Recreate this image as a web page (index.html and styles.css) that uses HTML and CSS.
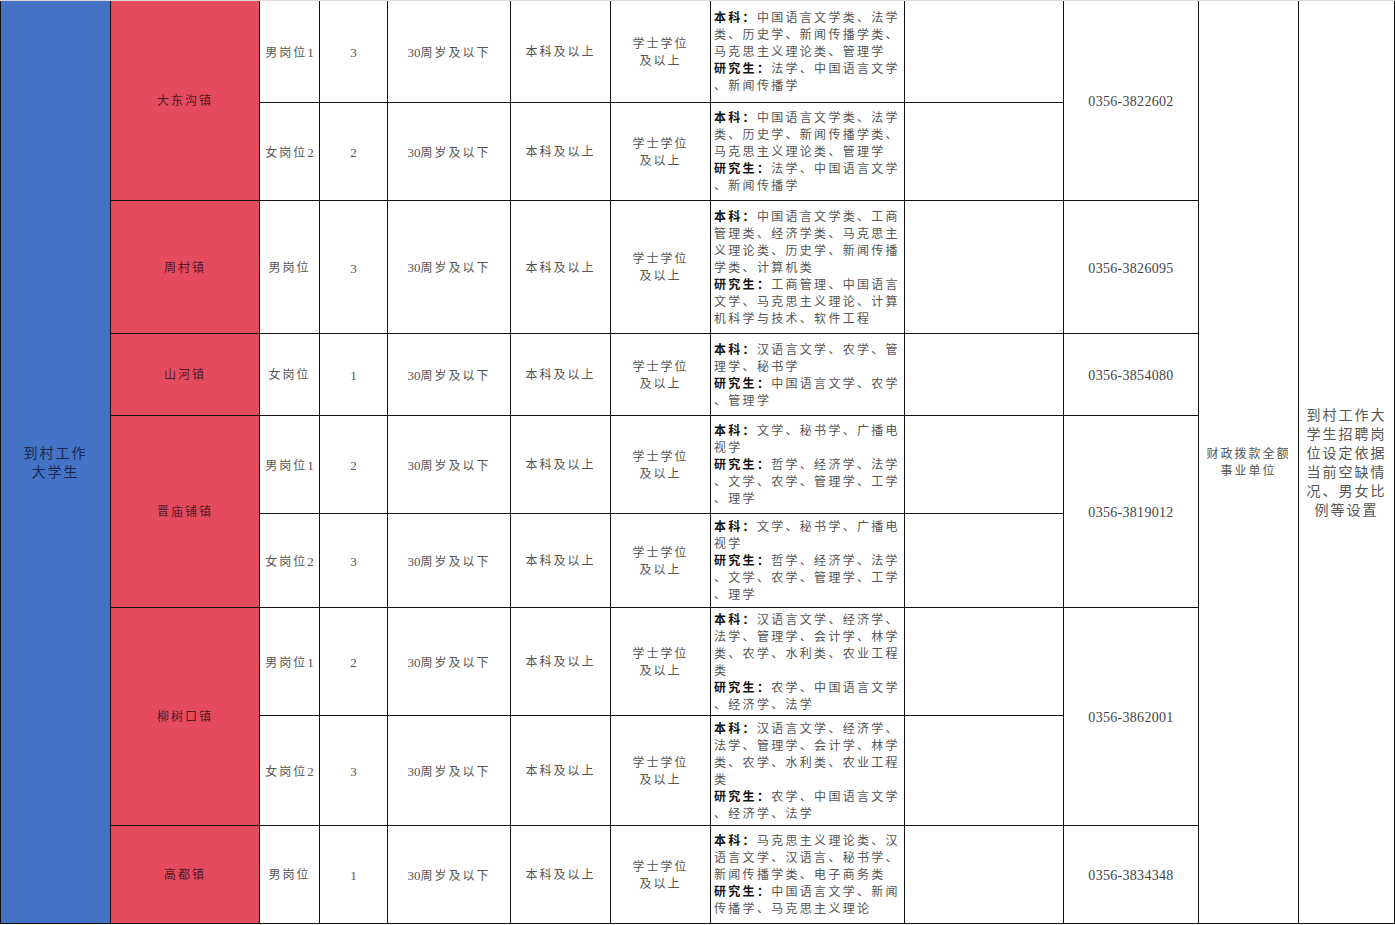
FILE: index.html
```html
<!DOCTYPE html>
<html lang="zh-CN">
<head>
<meta charset="utf-8">
<title>到村工作大学生招聘岗位</title>
<link rel="stylesheet" href="styles.css">
</head>
<body>
<table class="grid">
  <colgroup>
    <col class="c-type"><col class="c-town"><col class="c-post"><col class="c-num"><col class="c-age">
    <col class="c-edu"><col class="c-deg"><col class="c-major"><col class="c-note"><col class="c-tel">
    <col class="c-unit"><col class="c-basis">
  </colgroup>
  <tbody>
    <tr class="r1">
      <td class="type" rowspan="9">到村工作<br>大学生</td>
      <td class="town" rowspan="2">大东沟镇</td>
      <td>男岗位<span class="d">1</span></td>
      <td class="n">3</td>
      <td><span class="d">30</span>周岁及以下</td>
      <td>本科及以上</td>
      <td>学士学位<br>及以上</td>
      <td class="major"><b>本科：</b>中国语言文学类、法学<br>类、历史学、新闻传播学类、<br>马克思主义理论类、管理学<br><b>研究生：</b>法学、中国语言文学<br>、新闻传播学</td>
      <td></td>
      <td class="tel" rowspan="2">0356-3822602</td>
      <td class="unit" rowspan="9">财政拨款全额<br>事业单位</td>
      <td class="basis" rowspan="9">到村工作大<br>学生招聘岗<br>位设定依据<br>当前空缺情<br>况、男女比<br>例等设置</td>
    </tr>
    <tr class="r2">
      <td>女岗位<span class="d">2</span></td>
      <td class="n">2</td>
      <td><span class="d">30</span>周岁及以下</td>
      <td>本科及以上</td>
      <td>学士学位<br>及以上</td>
      <td class="major"><b>本科：</b>中国语言文学类、法学<br>类、历史学、新闻传播学类、<br>马克思主义理论类、管理学<br><b>研究生：</b>法学、中国语言文学<br>、新闻传播学</td>
      <td></td>
    </tr>
    <tr class="r3">
      <td class="town">周村镇</td>
      <td>男岗位</td>
      <td class="n">3</td>
      <td><span class="d">30</span>周岁及以下</td>
      <td>本科及以上</td>
      <td>学士学位<br>及以上</td>
      <td class="major"><b>本科：</b>中国语言文学类、工商<br>管理类、经济学类、马克思主<br>义理论类、历史学、新闻传播<br>学类、计算机类<br><b>研究生：</b>工商管理、中国语言<br>文学、马克思主义理论、计算<br>机科学与技术、软件工程</td>
      <td></td>
      <td class="tel">0356-3826095</td>
    </tr>
    <tr class="r4">
      <td class="town">山河镇</td>
      <td>女岗位</td>
      <td class="n">1</td>
      <td><span class="d">30</span>周岁及以下</td>
      <td>本科及以上</td>
      <td>学士学位<br>及以上</td>
      <td class="major"><b>本科：</b>汉语言文学、农学、管<br>理学、秘书学<br><b>研究生：</b>中国语言文学、农学<br>、管理学</td>
      <td></td>
      <td class="tel">0356-3854080</td>
    </tr>
    <tr class="r5">
      <td class="town" rowspan="2">晋庙铺镇</td>
      <td>男岗位<span class="d">1</span></td>
      <td class="n">2</td>
      <td><span class="d">30</span>周岁及以下</td>
      <td>本科及以上</td>
      <td>学士学位<br>及以上</td>
      <td class="major"><b>本科：</b>文学、秘书学、广播电<br>视学<br><b>研究生：</b>哲学、经济学、法学<br>、文学、农学、管理学、工学<br>、理学</td>
      <td></td>
      <td class="tel" rowspan="2">0356-3819012</td>
    </tr>
    <tr class="r6">
      <td>女岗位<span class="d">2</span></td>
      <td class="n">3</td>
      <td><span class="d">30</span>周岁及以下</td>
      <td>本科及以上</td>
      <td>学士学位<br>及以上</td>
      <td class="major"><b>本科：</b>文学、秘书学、广播电<br>视学<br><b>研究生：</b>哲学、经济学、法学<br>、文学、农学、管理学、工学<br>、理学</td>
      <td></td>
    </tr>
    <tr class="r7">
      <td class="town" rowspan="2">柳树口镇</td>
      <td>男岗位<span class="d">1</span></td>
      <td class="n">2</td>
      <td><span class="d">30</span>周岁及以下</td>
      <td>本科及以上</td>
      <td>学士学位<br>及以上</td>
      <td class="major"><b>本科：</b>汉语言文学、经济学、<br>法学、管理学、会计学、林学<br>类、农学、水利类、农业工程<br>类<br><b>研究生：</b>农学、中国语言文学<br>、经济学、法学</td>
      <td></td>
      <td class="tel" rowspan="2">0356-3862001</td>
    </tr>
    <tr class="r8">
      <td>女岗位<span class="d">2</span></td>
      <td class="n">3</td>
      <td><span class="d">30</span>周岁及以下</td>
      <td>本科及以上</td>
      <td>学士学位<br>及以上</td>
      <td class="major"><b>本科：</b>汉语言文学、经济学、<br>法学、管理学、会计学、林学<br>类、农学、水利类、农业工程<br>类<br><b>研究生：</b>农学、中国语言文学<br>、经济学、法学</td>
      <td></td>
    </tr>
    <tr class="r9">
      <td class="town">高都镇</td>
      <td>男岗位</td>
      <td class="n">1</td>
      <td><span class="d">30</span>周岁及以下</td>
      <td>本科及以上</td>
      <td>学士学位<br>及以上</td>
      <td class="major"><b>本科：</b>马克思主义理论类、汉<br>语言文学、汉语言、秘书学、<br>新闻传播学类、电子商务类<br><b>研究生：</b>中国语言文学、新闻<br>传播学、马克思主义理论</td>
      <td></td>
      <td class="tel">0356-3834348</td>
    </tr>
  </tbody>
</table>
</body>
</html>
```

FILE: styles.css
```css
html, body {
  margin: 0;
  padding: 0;
  background: #ffffff;
}

body {
  border-top: 1px solid #dcdcdc;
  font-family: "Liberation Serif", "Noto Sans CJK SC", serif;
  font-size: 12px;
  color: #555555;
}

.grid {
  width: 1395px;
  border-collapse: collapse;
  table-layout: fixed;
}

.c-type { width: 110px; }
.c-town { width: 149px; }
.c-post { width: 60px; }
.c-num { width: 68px; }
.c-age { width: 123px; }
.c-edu { width: 100px; }
.c-deg { width: 100px; }
.c-major { width: 194px; }
.c-note { width: 159px; }
.c-tel { width: 135px; }
.c-unit { width: 100px; }
.c-basis { width: 96px; }

.grid td {
  border: 1px solid #111111;
  padding: 2px 0 0 0;
  text-align: center;
  vertical-align: middle;
  line-height: 17px;
  letter-spacing: 2px;
  white-space: nowrap;
  overflow: hidden;
}

.grid tr:first-child td {
  border-top: none;
}

.r1 td { height: 99px; }
.r2 td { height: 95px; }
.r3 td { height: 130px; }
.r4 td { height: 79px; }
.r5 td { height: 95px; }
.r6 td { height: 91px; }
.r7 td { height: 105px; }
.r8 td { height: 107px; }
.r9 td { height: 95px; }

.d {
  font-size: 13px;
  letter-spacing: 0;
}

.grid td.n {
  font-size: 13px;
  letter-spacing: 0;
}

.grid td.type {
  background: #4472c4;
  color: rgba(10, 20, 50, 0.8);
  font-size: 14px;
  line-height: 19px;
  height: auto;
}

.grid td.town {
  background: #e54b5f;
  color: rgba(40, 10, 15, 0.8);
}

.grid td.major {
  text-align: left;
  padding-left: 3px;
  letter-spacing: 2.3px;
}

.major b {
  color: #111111;
  font-weight: bold;
}

.grid td.tel {
  font-size: 14px;
  letter-spacing: 0.3px;
  color: #444444;
}

.grid td.unit {
  height: auto;
}

.grid td.basis {
  font-size: 14px;
  line-height: 19px;
  height: auto;
}
```
